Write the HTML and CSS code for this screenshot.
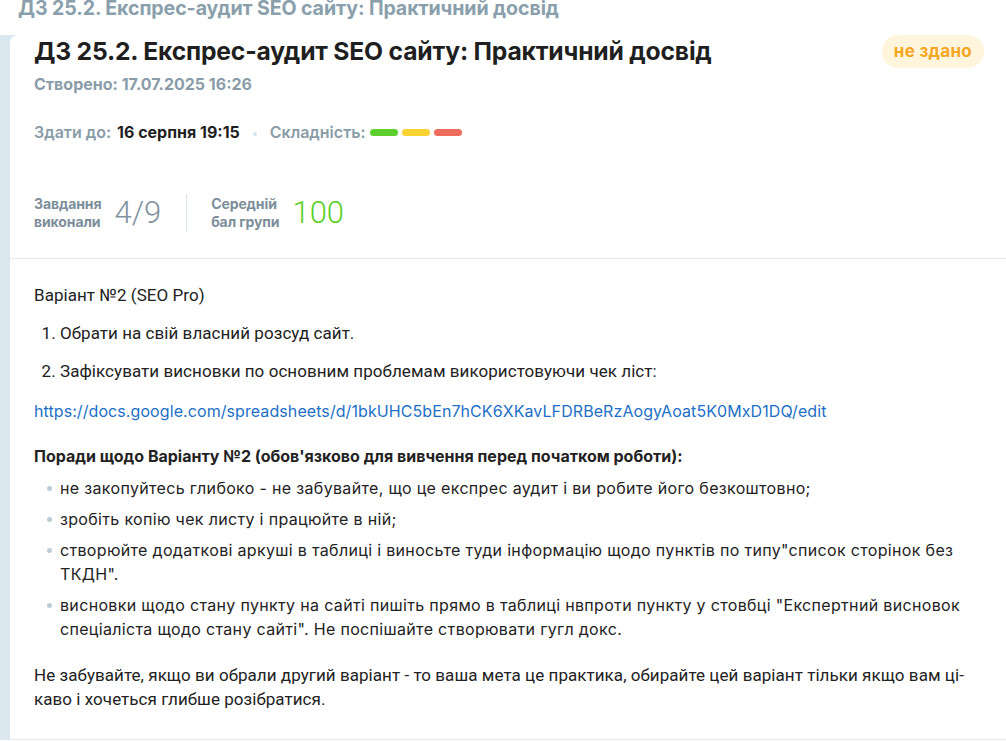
FILE: index.html
```html
<!DOCTYPE html>
<html lang="uk">
<head>
  <meta charset="UTF-8" />
  <meta name="viewport" content="width=device-width, initial-scale=1.0"/>
  <title>ДЗ 25.2</title>
  <link rel="stylesheet" href="styles.css">
</head>
<body>
  <div class="crumb">ДЗ 25.2. Експрес-аудит SEO сайту: Практичний досвід</div>

  <div class="frame">
    <div class="card">
      <div class="head">
        <div class="head-top">
          <div>
            <h1>ДЗ 25.2. Експрес-аудит SEO сайту: Практичний досвід</h1>
            <div class="created">Створено: 17.07.2025 16:26</div>
          </div>
          <span class="badge">не здано</span>
        </div>

        <div class="meta">
          <span class="meta-label">Здати до:</span>
          <span class="meta-value">16 серпня 19:15</span>
          <span class="meta-dot"></span>
          <span class="meta-label">Складність:</span>
          <span class="level">
            <i class="green"></i><i class="yellow"></i><i class="red"></i>
          </span>
        </div>

        <div class="stats">
          <div class="stat">
            <span class="stat-label">Завдання<br>виконали</span>
            <span class="stat-num">4/9</span>
          </div>
          <div class="stat">
            <span class="stat-label">Середній<br>бал групи</span>
            <span class="stat-num good">100</span>
          </div>
        </div>
      </div>

      <div class="body">
        <p class="plain">Варіант №2 (SEO Pro)</p>
        <ol class="plain">
          <li>Обрати на свій власний розсуд сайт.</li>
          <li>Зафіксувати висновки по основним проблемам використовуючи чек ліст:</li>
        </ol>
        <p><a href="#">https://docs.google.com/spreadsheets/d/1bkUHC5bEn7hCK6XKavLFDRBeRzAogyAoat5K0MxD1DQ/edit</a></p>

        <p class="tips-title">Поради щодо Варіанту №2 (обов'язково для вивчення перед початком роботи):</p>
        <ul class="tips">
          <li>не закопуйтесь глибоко - не забувайте, що це експрес аудит і ви робите його безкоштовно;</li>
          <li>зробіть копію чек листу і працюйте в ній;</li>
          <li>створюйте додаткові аркуші в таблиці і виносьте туди інформацію щодо пунктів по типу"список сторінок без ТКДН".</li>
          <li>висновки щодо стану пункту на сайті пишіть прямо в таблиці нвпроти пункту у стовбці "Експертний висновок спеціаліста щодо стану сайті". Не поспішайте створювати гугл докс.</li>
        </ul>

        <p class="plain last">Не забувайте, якщо ви обрали другий варіант - то ваша мета це практика, обирайте цей варіант тільки якщо вам ці-<br>каво і хочеться глибше розібратися.</p>
      </div>
    </div>
  </div>
</body>
</html>
```

FILE: styles.css
```css
body {
  margin: 0;
  padding: 0;
  background: #fff;
  font-family: Inter, 'Noto Sans', sans-serif;
  color: #222;
  overflow: hidden;
}

.crumb {
  height: 38px;
  padding: 0 18px;
  margin-top: -3px;
  font-size: 19.6px;
  line-height: 22px;
  font-weight: 700;
  color: #8a9fac;
  letter-spacing: -0.1px;
}

.frame {
  background: #dbe7ee;
  padding-left: 10px;
}

.card {
  background: #fff;
  border-top-left-radius: 8px;
}

.head {
  padding: 0 22px 0 24px;
  border-bottom: 1px solid #e3ebf0;
}

.head-top {
  display: flex;
  justify-content: space-between;
  align-items: flex-start;
}

h1 {
  margin: 1px 0 0;
  font-size: 24.7px;
  line-height: 30px;
  font-weight: 700;
  color: #1f1f1f;
  letter-spacing: -0.2px;
}

.created {
  margin-top: 8px;
  font-size: 16px;
  font-weight: 700;
  color: #8a9ca8;
}

.badge {
  background: #fff5dc;
  color: #f5a623;
  font-weight: 700;
  font-size: 17px;
  line-height: 33px;
  padding: 0 12px;
  border-radius: 17px;
  letter-spacing: 0.3px;
}

.meta {
  display: flex;
  align-items: center;
  gap: 6px;
  margin-top: 28px;
  font-size: 16px;
  font-weight: 600;
}

.meta-label {
  color: #8a9ca8;
}

.meta-value {
  color: #1f1f1f;
  font-weight: 700;
}

.meta-dot {
  width: 4px;
  height: 4px;
  border-radius: 50%;
  background: #d6e2ea;
  margin: 4px 7px 0;
}

.level {
  display: flex;
  gap: 4px;
  margin-left: -2px;
}

.level i {
  display: block;
  width: 28px;
  height: 7px;
  border-radius: 4px;
}

.level .green { background: #5ccf2e; }
.level .yellow { background: #f9d331; }
.level .red { background: #ee6c5b; }

.stats {
  display: flex;
  align-items: center;
  margin-top: 52px;
  padding-bottom: 26px;
}

.stat {
  display: flex;
  align-items: center;
  gap: 13px;
}

.stat + .stat {
  border-left: 1px solid #dde7ee;
  margin-left: 25px;
  padding-left: 24px;
}

.stat-label {
  font-size: 14px;
  line-height: 18px;
  font-weight: 700;
  color: #7c8e9a;
  letter-spacing: -0.1px;
}

.stat-num {
  font-family: Roboto, sans-serif;
  font-weight: 300;
  font-size: 31px;
  line-height: 38px;
  color: #7f93a0;
}

.stat-num.good {
  color: #5bd02b;
}

.body {
  padding: 24px 24px 28px;
  border-bottom: 1px solid #e3ebf0;
  font-size: 16px;
  line-height: 24px;
  color: #222;
}

.body p {
  margin: 0 0 14px;
}

.body p.last {
  margin-bottom: 0;
}

.plain {
  font-family: Roboto, sans-serif;
  font-size: 17px;
  letter-spacing: 0.05px;
}

.body ol {
  margin: 0 0 16px;
  padding-left: 26px;
}

.body ol li {
  margin-bottom: 14px;
}

.body a {
  color: #1d6fc7;
  text-decoration: none;
  letter-spacing: 0.08px;
}

.tips-title {
  font-weight: 700;
  margin-top: 21px !important;
  margin-bottom: 8px !important;
}

.tips {
  list-style: none;
  margin: 0 0 22px;
  padding-left: 26px;
}

.tips li {
  position: relative;
  margin-bottom: 7px;
  letter-spacing: 0.33px;
}

.tips li::before {
  content: "";
  position: absolute;
  left: -13px;
  top: 10px;
  width: 5px;
  height: 5px;
  border-radius: 50%;
  background: #bccdd8;
}
```
